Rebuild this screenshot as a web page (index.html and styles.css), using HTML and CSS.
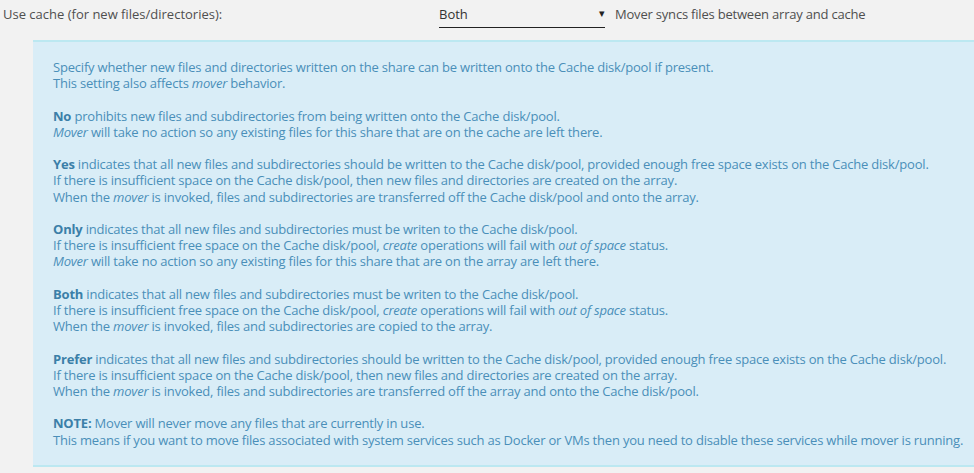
FILE: index.html
```html
<!DOCTYPE html>
<html lang="en">
<head>
    <meta charset="UTF-8">
    <title>Share settings</title>
    <link rel="stylesheet" href="styles.css">
</head>
<body>
    <div class="setting-row">
        <div class="setting-label">Use cache (for new files/directories):</div>
        <div class="setting-select">
            <span>Both</span>
            <span class="arrow">&#9662;</span>
        </div>
        <div class="setting-note">Mover syncs files between array and cache</div>
    </div>
    <div class="help-box">
        <p>Specify whether new files and directories written on the share can be written onto the Cache disk/pool if present.<br>
        This setting also affects <i>mover</i> behavior.</p>

        <p><b>No</b> prohibits new files and subdirectories from being written onto the Cache disk/pool.<br>
        <i>Mover</i> will take no action so any existing files for this share that are on the cache are left there.</p>

        <p><b>Yes</b> indicates that all new files and subdirectories should be written to the Cache disk/pool, provided enough free space exists on the Cache disk/pool.<br>
        If there is insufficient space on the Cache disk/pool, then new files and directories are created on the array.<br>
        When the <i>mover</i> is invoked, files and subdirectories are transferred off the Cache disk/pool and onto the array.</p>

        <p><b>Only</b> indicates that all new files and subdirectories must be writen to the Cache disk/pool.<br>
        If there is insufficient free space on the Cache disk/pool, <i>create</i> operations will fail with <i>out of space</i> status.<br>
        <i>Mover</i> will take no action so any existing files for this share that are on the array are left there.</p>

        <p><b>Both</b> indicates that all new files and subdirectories must be writen to the Cache disk/pool.<br>
        If there is insufficient free space on the Cache disk/pool, <i>create</i> operations will fail with <i>out of space</i> status.<br>
        When the <i>mover</i> is invoked, files and subdirectories are copied to the array.</p>

        <p><b>Prefer</b> indicates that all new files and subdirectories should be written to the Cache disk/pool, provided enough free space exists on the Cache disk/pool.<br>
        If there is insufficient space on the Cache disk/pool, then new files and directories are created on the array.<br>
        When the <i>mover</i> is invoked, files and subdirectories are transferred off the array and onto the Cache disk/pool.</p>

        <p><b>NOTE:</b> Mover will never move any files that are currently in use.<br>
        This means if you want to move files associated with system services such as Docker or VMs then you need to disable these services while mover is running.</p>
    </div>
</body>
</html>
```

FILE: styles.css
```css
body {
    margin: 0;
    background-color: #f2f2f2;
    font-family: 'Open Sans', 'Noto Sans', sans-serif;
    font-size: 13px;
    color: #4f4f4f;
    overflow: hidden;
}
.setting-row {
    display: flex;
    align-items: flex-start;
    height: 40px;
    padding-left: 3px;
}
.setting-label {
    width: 436px;
    padding-top: 5px;
}
.setting-select {
    display: flex;
    justify-content: space-between;
    width: 166px;
    height: 22px;
    padding-top: 5px;
    border-bottom: 1px solid #222;
    color: #333;
}
.setting-select .arrow {
    font-size: 11px;
    color: #222;
}
.setting-note {
    padding-top: 5px;
    margin-left: 10px;
    letter-spacing: -0.2px;
}
.help-box {
    margin-left: 33px;
    padding: 17px 20px 17px 20px;
    background-color: #d9edf7;
    border-top: 2px solid #bce8f1;
    border-bottom: 2px solid #bce8f1;
    color: #4a8fb9;
    line-height: 16.2px;
    letter-spacing: -0.2px;
    white-space: nowrap;
}
.help-box p {
    margin: 0 0 16.2px 0;
}
.help-box p:last-child {
    margin-bottom: 0;
}
.help-box b {
    color: #3b7fa8;
}
```
